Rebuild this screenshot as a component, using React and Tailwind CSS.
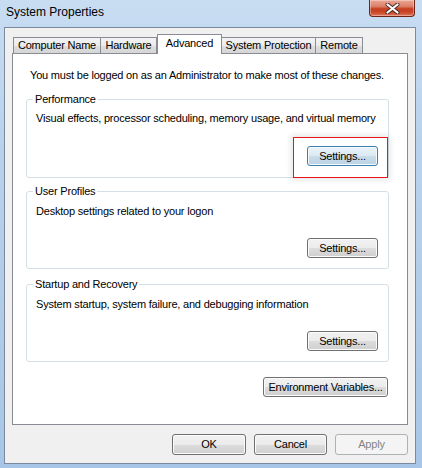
import React from "react";

const font = { fontFamily: '"Liberation Sans", Arial, sans-serif' };

function Btn({ children, className = "", variant = "normal" }) {
  const base =
    "h-[20px] flex items-center justify-center rounded-[3px] border text-[11px] tracking-[-0.2px] leading-none";
  const v =
    variant === "hot"
      ? "border-[#3c7fb1] bg-[linear-gradient(#eaf3f9,#dce9f2_50%,#c9dcea_50%,#bcd3e4)] shadow-[inset_0_0_0_1px_#f4fafd] text-black"
      : variant === "disabled"
      ? "border-[#adb2b5] bg-[#f4f4f4] text-[#838383]"
      : "border-[#707070] bg-[linear-gradient(#f2f2f2,#ebebeb_50%,#dddddd_50%,#cfcfcf)] shadow-[inset_0_0_0_1px_#fbfbfb] text-black";
  return <div className={`${base} ${v} ${className}`}>{children}</div>;
}

function Group({ title, desc, className = "", descTop = "pt-[11px]", btnMb = "mb-[11px]", hot = false }) {
  return (
    <div
      className={`relative ml-[13px] w-[363px] flex flex-col rounded-[3px] border border-[#d5dfe5] ${className}`}
    >
      <span className="absolute -top-[8px] left-[6px] bg-white px-[2px] text-[11px] leading-[14px] tracking-[-0.2px] text-black">
        {title}
      </span>
      <div className={`pl-[9px] ${descTop} text-[11px] leading-[14px] tracking-[-0.2px] text-black`}>{desc}</div>
      <div className={`mt-auto self-end mr-[10px] ${btnMb} relative`}>
        <Btn variant={hot ? "hot" : "normal"} className="w-[71px]">
          Settings...
        </Btn>
        {hot && (
          <div className="absolute -left-[13px] -top-[8px] w-[93px] h-[39px] shadow-[0_0_0_1px_#e8161b,0_0_6px_3px_rgba(0,0,0,0.10)] pointer-events-none" />
        )}
      </div>
    </div>
  );
}

export default function App() {
  const tabInactive =
    "h-[16px] flex items-center justify-center border border-b-0 border-[#898c95] bg-[linear-gradient(#f3f3f3,#ebebeb_50%,#dedede_50%,#d6d6d6)] text-[11px] tracking-[-0.2px] text-black leading-none";
  return (
    <div
      style={font}
      className="w-[422px] h-[468px] overflow-hidden flex flex-col bg-[linear-gradient(180deg,#c8ddf2_0%,#b9d2ec_30%,#b0cbe8_70%,#a7c6e7_100%)]"
    >
      {/* Title bar */}
      <div className="h-[27px] flex items-start justify-between shrink-0">
        <div className="pl-[6px] pt-[5px] text-[12px] leading-[14px] text-black">System Properties</div>
        <div className="mr-[7px] w-[46px] h-[17px] rounded-b-[4px] border border-t-0 border-[#6e2418] bg-[linear-gradient(#eba695,#dc8069_40%,#c63f22_55%,#c94528_75%,#e07658)] shadow-[inset_0_0_0_1px_rgba(255,255,255,0.35)] flex items-center justify-center">
          <svg width="15" height="11" viewBox="0 0 15 11">
            <path d="M2.5 1.5 L12.5 9.5 M12.5 1.5 L2.5 9.5" stroke="#4a2a26" strokeWidth="4" strokeLinecap="round" />
            <path d="M2.5 1.5 L12.5 9.5 M12.5 1.5 L2.5 9.5" stroke="#ffffff" strokeWidth="2.2" strokeLinecap="round" />
          </svg>
        </div>
      </div>

      {/* Client area */}
      <div className="ml-[4px] w-[412px] h-[437px] bg-[#f0f0f0] border border-[#7a8a9c] flex flex-col">
        {/* Tabs */}
        <div className="ml-[8px] mt-[6px] h-[19px] flex items-end relative z-10">
          <div className={`${tabInactive} w-[88px]`}>Computer Name</div>
          <div className={`${tabInactive} w-[56px] border-l-0`}>Hardware</div>
          <div className="w-[65px] h-[20px] -mb-[1px] flex items-center justify-center border border-b-0 border-[#898c95] bg-white text-[11px] tracking-[-0.2px] text-black leading-none pb-[2px]">
            Advanced
          </div>
          <div className={`${tabInactive} w-[94px] border-l-0`}>System Protection</div>
          <div className={`${tabInactive} w-[47px] border-l-0`}>Remote</div>
        </div>

        {/* Panel */}
        <div className="ml-[7px] w-[396px] h-[372px] border border-[#898c95] bg-white flex flex-col">
          <div className="pl-[17px] pt-[14px] text-[11px] leading-[14px] tracking-[-0.2px] text-black">
            You must be logged on as an Administrator to make most of these changes.
          </div>
          <Group
            title="Performance"
            desc="Visual effects, processor scheduling, memory usage, and virtual memory"
            className="mt-[17px] h-[79px]"
            descTop="pt-[11px]"
            btnMb="mb-[11px]"
            hot
          />
          <Group
            title="User Profiles"
            desc="Desktop settings related to your logon"
            className="mt-[13px] h-[78px]"
            descTop="pt-[12px]"
            btnMb="mb-[10px]"
          />
          <Group
            title="Startup and Recovery"
            desc="System startup, system failure, and debugging information"
            className="mt-[15px] h-[78px]"
            descTop="pt-[12px]"
            btnMb="mb-[10px]"
          />
          <div className="mt-[15px] self-end mr-[19px]">
            <Btn className="w-[125px]">Environment Variables...</Btn>
          </div>
        </div>

        {/* Bottom buttons */}
        <div className="mt-[9px] mr-[7px] flex justify-end gap-[8px]">
          <Btn className="w-[74px] h-[21px]">OK</Btn>
          <Btn className="w-[73px] h-[21px]">Cancel</Btn>
          <Btn variant="disabled" className="w-[73px] h-[21px]">
            Apply
          </Btn>
        </div>
      </div>
    </div>
  );
}
